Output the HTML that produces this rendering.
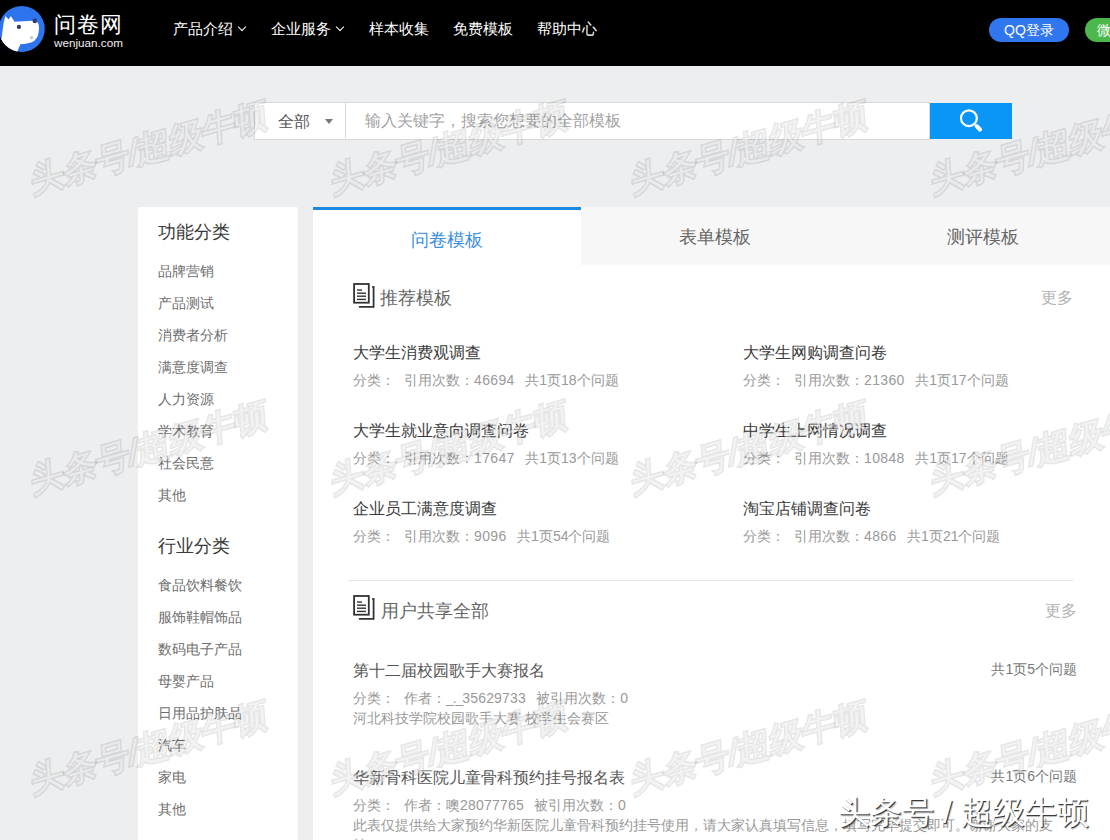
<!DOCTYPE html>
<html><head><meta charset="utf-8">
<style>
*{margin:0;padding:0;box-sizing:border-box}
html,body{width:1110px;height:840px;overflow:hidden}
body{background:#edeef0;font-family:"Liberation Sans",sans-serif;position:relative;color:#333}
.abs{position:absolute;white-space:nowrap}
#hdr{position:absolute;left:0;top:0;width:1110px;height:66px;background:#000}
.nav{position:absolute;top:19px;color:#fff;font-size:15px;line-height:20px}
.chev{display:inline-block;width:6px;height:6px;border-right:1.6px solid #fff;border-bottom:1.6px solid #fff;transform:rotate(45deg);margin-left:6px;position:relative;top:-4px}
.btn{position:absolute;top:18px;height:24px;border-radius:12px;color:#fff;font-size:14px;line-height:24px;text-align:center}
#search{position:absolute;left:254px;top:102px;width:676px;height:38px;background:#fff;border:1px solid #d9d9d9}
#sbtn{position:absolute;left:930px;top:103px;width:82px;height:36px;background:#0996f6}
#side{position:absolute;left:138px;top:207px;width:160px;height:640px;background:#fff;border-radius:2px}
#main{position:absolute;left:313px;top:207px;width:810px;height:640px;background:#fff}
.sh{position:absolute;left:20px;font-size:18px;color:#3a3a3a;line-height:24px;margin-top:1px}
.si{position:absolute;left:20px;font-size:14px;color:#6e6e6e;line-height:20px;margin-top:1px}
.tab{position:absolute;top:1px;height:58px;font-size:18px;line-height:58px;text-align:center;color:#666}
.t1{font-size:16px;color:#3a3a3a;line-height:22px}
.m1{font-size:14px;color:#999;line-height:18px}
.g1{display:inline-block;width:9px}.g2{display:inline-block;width:10.5px}.d{letter-spacing:.36px}
.more{font-size:16px;color:#b3b3b3;line-height:20px}
</style></head><body>
<div id="hdr">
  <svg class="abs" style="left:0;top:0" width="50" height="60" viewBox="0 0 50 60">
    <defs><clipPath id="lc"><circle cx="21.8" cy="29" r="23"/></clipPath></defs>
    <circle cx="21.8" cy="29" r="23" fill="#2e74ee"/>
    <path clip-path="url(#lc)" fill="#fff" d="M1.5,38.5 L3.6,23 L5.3,16.1 L8.7,19.5 L10.8,16.1 L14.6,21.8 L32.2,20.7 L36.5,21 Q39.5,24 39,29 Q38.5,35 37,37.5 Q35,41 31,42.5 Q26,44 20.4,44.2 L16.7,53 L-2,53 L-2,38.5 Z"/>
    <circle cx="18.9" cy="26.9" r="2.1" fill="#2a3a66"/>
    <circle cx="34.8" cy="20.9" r="2.3" fill="#3a3a70"/>
    <circle cx="31.6" cy="37.7" r="1.8" fill="#c9c6d6"/>
  </svg>
  <div class="abs" style="left:54px;top:12px;color:#fff;font-size:22px;line-height:26px;letter-spacing:1.2px">问卷网</div>
  <div class="abs" style="left:54px;top:35.5px;color:#f0f0f0;font-size:11.7px;line-height:14px">wenjuan.com</div>
  <div class="nav" style="left:173px">产品介绍<span class="chev"></span></div>
  <div class="nav" style="left:271px">企业服务<span class="chev"></span></div>
  <div class="nav" style="left:369px">样本收集</div>
  <div class="nav" style="left:453px">免费模板</div>
  <div class="nav" style="left:537px">帮助中心</div>
  <div class="btn" style="left:989px;width:80px;background:#2f76ef">QQ登录</div>
  <div class="btn" style="left:1085px;width:60px;background:#4cb84c;text-align:left;padding-left:12px">微</div>
</div>

<div id="search">
  <div class="abs" style="left:23px;top:9px;font-size:16px;line-height:20px;color:#555">全部</div>
  <div class="abs" style="left:70px;top:16px;width:0;height:0;border-left:4.5px solid transparent;border-right:4.5px solid transparent;border-top:5px solid #777"></div>
  <div class="abs" style="left:90px;top:0;width:1px;height:35px;background:#d9d9d9"></div>
  <div class="abs" style="left:110px;top:8px;font-size:16px;line-height:20px;color:#a3a3a3">输入关键字，搜索您想要的全部模板</div>
</div>
<div id="sbtn"><svg class="abs" style="left:0;top:0" width="82" height="36" viewBox="0 0 82 36">
  <circle cx="38.9" cy="15.2" r="7.9" fill="none" stroke="#fff" stroke-width="2.2"/>
  <line x1="45.2" y1="21.8" x2="50" y2="26.6" stroke="#fff" stroke-width="2.6"/>
  <line x1="47" y1="23.6" x2="50" y2="26.6" stroke="#fff" stroke-width="4.2" stroke-linecap="round"/>
</svg></div>

<div id="side">
  <div class="sh" style="top:12px">功能分类</div>
  <div class="si" style="top:53px">品牌营销</div>
  <div class="si" style="top:85px">产品测试</div>
  <div class="si" style="top:117px">消费者分析</div>
  <div class="si" style="top:149px">满意度调查</div>
  <div class="si" style="top:181px">人力资源</div>
  <div class="si" style="top:213px">学术教育</div>
  <div class="si" style="top:245px">社会民意</div>
  <div class="si" style="top:277px">其他</div>
  <div class="sh" style="top:326px">行业分类</div>
  <div class="si" style="top:367px">食品饮料餐饮</div>
  <div class="si" style="top:399px">服饰鞋帽饰品</div>
  <div class="si" style="top:431px">数码电子产品</div>
  <div class="si" style="top:463px">母婴产品</div>
  <div class="si" style="top:495px">日用品护肤品</div>
  <div class="si" style="top:527px">汽车</div>
  <div class="si" style="top:559px">家电</div>
  <div class="si" style="top:591px">其他</div>
</div>

<div id="main">
  <div class="abs" style="left:0;top:0;width:268px;height:3px;background:#1a8be0"></div>
  <div class="abs" style="left:268px;top:0;width:542px;height:58px;background:#f7f7f7"></div>
  <div class="tab" style="left:0;width:268px;color:#3b8fe0;top:4px">问卷模板</div>
  <div class="tab" style="left:268px;width:268px">表单模板</div>
  <div class="tab" style="left:536px;width:268px">测评模板</div>

  <svg class="abs" style="left:38px;top:74px" width="26" height="28" viewBox="0 0 26 28">
    <rect x="3.1" y="3" width="14.7" height="18.7" fill="none" stroke="#333" stroke-width="1.8"/>
    <polyline points="21.2,6 22.6,6 22.6,25.8 7.9,25.8" fill="none" stroke="#333" stroke-width="1.8"/>
    <line x1="6" y1="9" x2="11" y2="9" stroke="#333" stroke-width="1.4"/>
    <line x1="6" y1="12.2" x2="15" y2="12.2" stroke="#333" stroke-width="1.4"/>
    <line x1="6" y1="15.2" x2="15" y2="15.2" stroke="#333" stroke-width="1.4"/>
    <line x1="6" y1="18.4" x2="15" y2="18.4" stroke="#333" stroke-width="1.4"/>
  </svg>
  <div class="abs" style="left:67px;top:79px;font-size:18px;line-height:24px;color:#666">推荐模板</div>
  <div class="abs more" style="left:728px;top:81px">更多</div>

  <div class="abs t1" style="left:40px;top:135px">大学生消费观调查</div>
  <div class="abs m1" style="left:40px;top:164px">分类：<i class="g1"></i>引用次数：<span class="d">46694</span><i class="g2"></i>共1页18个问题</div>
  <div class="abs t1" style="left:430px;top:135px">大学生网购调查问卷</div>
  <div class="abs m1" style="left:430px;top:164px">分类：<i class="g1"></i>引用次数：<span class="d">21360</span><i class="g2"></i>共1页17个问题</div>

  <div class="abs t1" style="left:40px;top:213px">大学生就业意向调查问卷</div>
  <div class="abs m1" style="left:40px;top:242px">分类：<i class="g1"></i>引用次数：<span class="d">17647</span><i class="g2"></i>共1页13个问题</div>
  <div class="abs t1" style="left:430px;top:213px">中学生上网情况调查</div>
  <div class="abs m1" style="left:430px;top:242px">分类：<i class="g1"></i>引用次数：<span class="d">10848</span><i class="g2"></i>共1页17个问题</div>

  <div class="abs t1" style="left:40px;top:291px">企业员工满意度调查</div>
  <div class="abs m1" style="left:40px;top:320px">分类：<i class="g1"></i>引用次数：<span class="d">9096</span><i class="g2"></i>共1页54个问题</div>
  <div class="abs t1" style="left:430px;top:291px">淘宝店铺调查问卷</div>
  <div class="abs m1" style="left:430px;top:320px">分类：<i class="g1"></i>引用次数：<span class="d">4866</span><i class="g2"></i>共1页21个问题</div>

  <div class="abs" style="left:35px;top:373px;width:725px;height:1px;background:#e3e3e3"></div>

  <svg class="abs" style="left:38px;top:386px" width="26" height="28" viewBox="0 0 26 28">
    <rect x="3.1" y="3" width="14.7" height="18.7" fill="none" stroke="#333" stroke-width="1.8"/>
    <polyline points="21.2,6 22.6,6 22.6,25.8 7.9,25.8" fill="none" stroke="#333" stroke-width="1.8"/>
    <line x1="6" y1="9" x2="11" y2="9" stroke="#333" stroke-width="1.4"/>
    <line x1="6" y1="12.2" x2="15" y2="12.2" stroke="#333" stroke-width="1.4"/>
    <line x1="6" y1="15.2" x2="15" y2="15.2" stroke="#333" stroke-width="1.4"/>
    <line x1="6" y1="18.4" x2="15" y2="18.4" stroke="#333" stroke-width="1.4"/>
  </svg>
  <div class="abs" style="left:68px;top:392px;font-size:18px;line-height:24px;color:#666">用户共享全部</div>
  <div class="abs more" style="left:732px;top:394px">更多</div>

  <div class="abs t1" style="left:40px;top:453px;color:#555">第十二届校园歌手大赛报名</div>
  <div class="abs m1" style="right:46px;top:453px;color:#777">共1页5个问题</div>
  <div class="abs m1" style="left:40px;top:481.5px">分类：<i class="g1"></i>作者：<span style="letter-spacing:-1.1px">_._</span><span style="letter-spacing:.2px">35629733</span><i class="g2" style="width:10.2px"></i>被引用次数：0</div>
  <div class="abs m1" style="left:40px;top:501.5px">河北科技学院校园歌手大赛 校学生会赛区</div>

  <div class="abs t1" style="left:40px;top:560px;color:#555">华新骨科医院儿童骨科预约挂号报名表</div>
  <div class="abs m1" style="right:46px;top:560px;color:#777">共1页6个问题</div>
  <div class="abs m1" style="left:40px;top:588.5px">分类：<i class="g1"></i>作者：噢<span style="letter-spacing:.2px">28077765</span><i class="g2" style="width:10.2px"></i>被引用次数：0</div>
  <div class="abs m1" style="left:40px;top:608.5px">此表仅提供给大家预约华新医院儿童骨科预约挂号使用，请大家认真填写信息，填写完毕提交即可。谢谢大家的支</div>
  <div class="abs m1" style="left:40px;top:628.5px">持</div>
</div>
<svg class="abs" style="left:0;top:0;pointer-events:none" width="1110" height="840" viewBox="0 0 1110 840">
<style>.wm{font-family:"Liberation Sans",sans-serif;font-size:34px;font-weight:normal;fill:#fff;fill-opacity:.5;stroke:#000;stroke-opacity:.1;stroke-width:3.4px;paint-order:stroke}</style>
<g transform="translate(46,177) rotate(-16) skewX(-12)"><text x="-15" y="12" class="wm">头条号/超级牛顿</text></g>
<g transform="translate(346,177) rotate(-16) skewX(-12)"><text x="-15" y="12" class="wm">头条号/超级牛顿</text></g>
<g transform="translate(646,177) rotate(-16) skewX(-12)"><text x="-15" y="12" class="wm">头条号/超级牛顿</text></g>
<g transform="translate(946,177) rotate(-16) skewX(-12)"><text x="-15" y="12" class="wm">头条号/超级牛顿</text></g>
<g transform="translate(46,477) rotate(-16) skewX(-12)"><text x="-15" y="12" class="wm">头条号/超级牛顿</text></g>
<g transform="translate(346,477) rotate(-16) skewX(-12)"><text x="-15" y="12" class="wm">头条号/超级牛顿</text></g>
<g transform="translate(646,477) rotate(-16) skewX(-12)"><text x="-15" y="12" class="wm">头条号/超级牛顿</text></g>
<g transform="translate(946,477) rotate(-16) skewX(-12)"><text x="-15" y="12" class="wm">头条号/超级牛顿</text></g>
<g transform="translate(46,777) rotate(-16) skewX(-12)"><text x="-15" y="12" class="wm">头条号/超级牛顿</text></g>
<g transform="translate(346,777) rotate(-16) skewX(-12)"><text x="-15" y="12" class="wm">头条号/超级牛顿</text></g>
<g transform="translate(646,777) rotate(-16) skewX(-12)"><text x="-15" y="12" class="wm">头条号/超级牛顿</text></g>
<g transform="translate(946,777) rotate(-16) skewX(-12)"><text x="-15" y="12" class="wm">头条号/超级牛顿</text></g>
</svg>
<div class="abs" style="left:838px;top:794px;font-size:32px;line-height:36px;color:#fff;text-shadow:1px 1px 0 rgba(50,50,50,.95),1.5px 1.5px 1px rgba(50,50,50,.35)">头条号 / 超级牛顿</div>
</body></html>
